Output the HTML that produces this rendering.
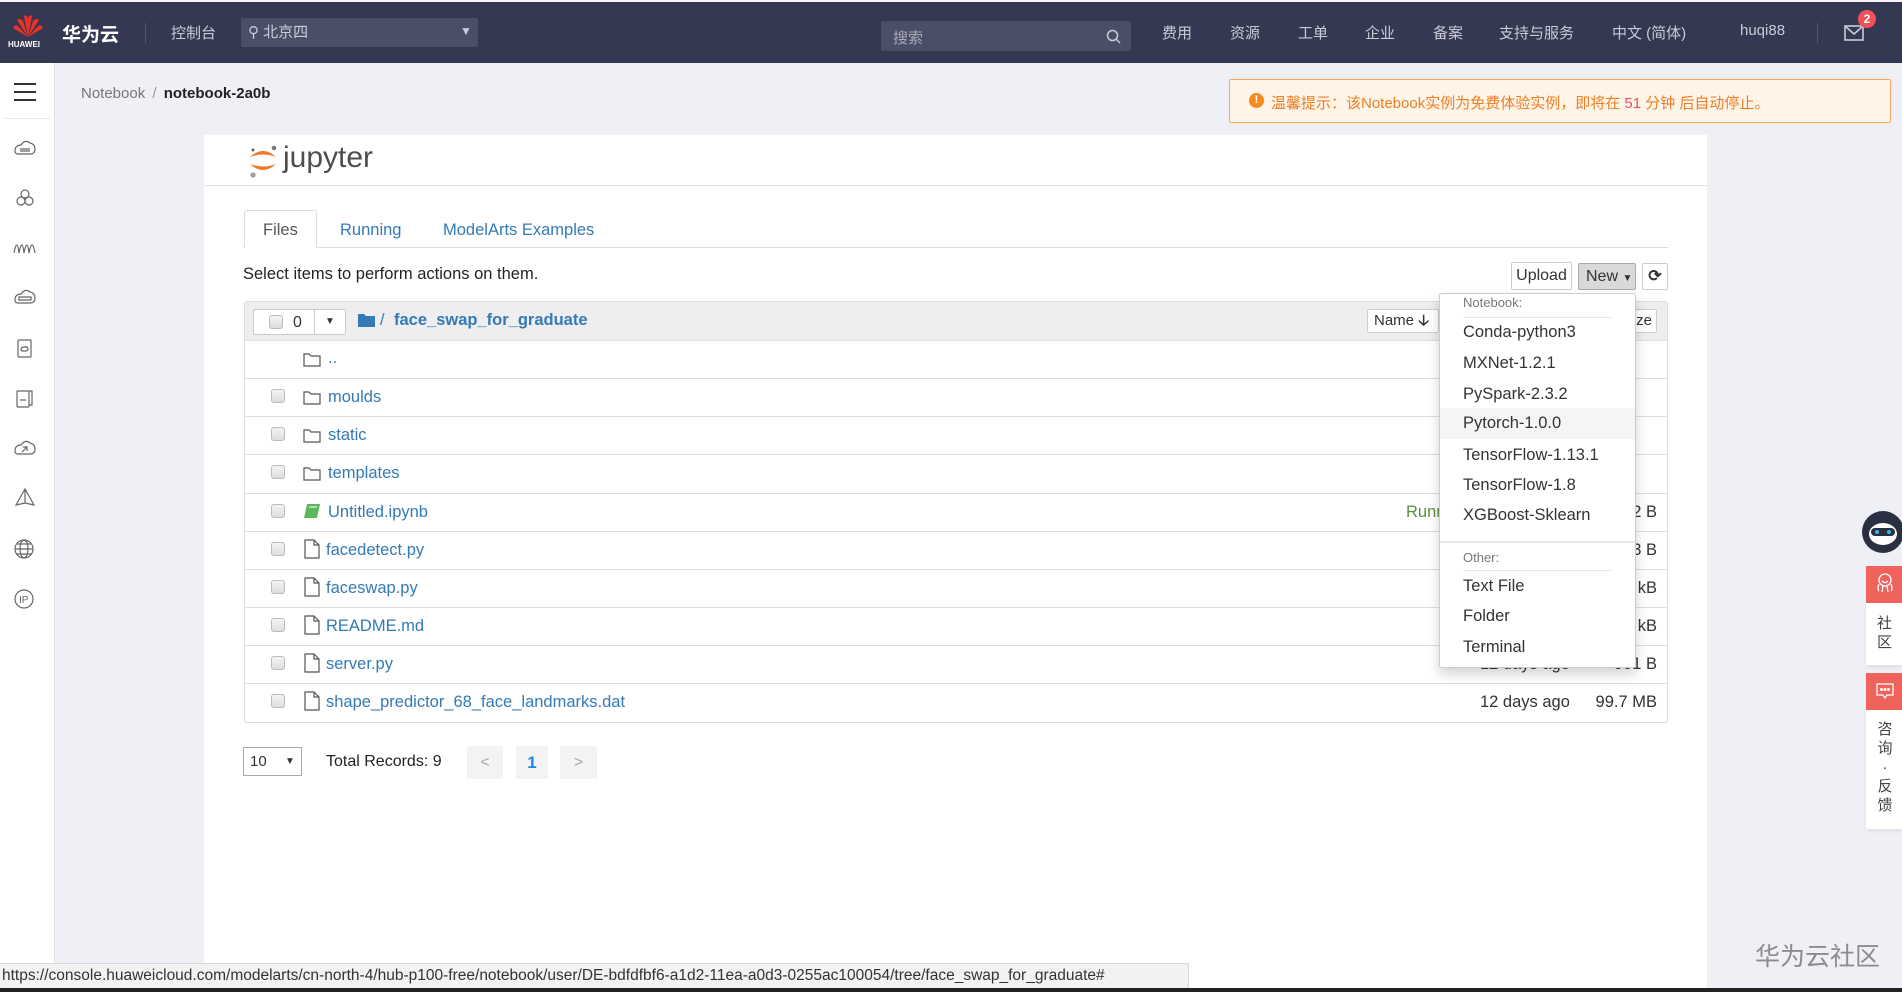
<!DOCTYPE html>
<html><head><meta charset="utf-8">
<style>
*{box-sizing:border-box;margin:0;padding:0}
body{width:1902px;height:992px;overflow:hidden;background:#eef0f5;font-family:"Liberation Sans","Noto Sans CJK SC",sans-serif;position:relative;color:#333}
.a{position:absolute;white-space:nowrap}
.top{position:absolute;left:0;top:0;width:1902px;height:63px;background:#353851;border-top:2px solid #f5f5f5}
.nav{position:absolute;top:20px;font-size:15px;color:#c9cbd8}
.side{position:absolute;left:0;top:63px;width:55px;height:929px;background:#fff;border-right:1px solid #e2e4ea}
.panel{position:absolute;left:204px;top:135px;width:1503px;height:857px;background:#fff}
.row{position:absolute;left:244px;width:1424px;height:38px;border-top:1px solid #ddd;font-size:16.5px}
.cb{position:absolute;left:271px;width:14px;height:14px;border:1px solid #bbb;border-radius:3px;background:linear-gradient(#f4f4f4,#ddd)}
.nm{position:absolute;left:327px;color:#337ab7;top:9px}
.sz{position:absolute;right:11px;top:9px;text-align:right}
.dd{font-size:16.5px;color:#333;position:absolute;left:1463px}
</style></head><body>
<div class="top">
 <svg class="a" style="left:11px;top:11px" width="34" height="26" viewBox="0 0 34 26"><g fill="#e8312a"><path d="M17 24 L13 3 Q16 1 17 6Z"/><path d="M17 24 L21 3 Q18 1 17 6Z"/><path d="M17 24 L6 7 Q9 4 12 8Z"/><path d="M17 24 L28 7 Q25 4 22 8Z"/><path d="M17 24 L2 15 Q3 11 7 13Z"/><path d="M17 24 L32 15 Q31 11 27 13Z"/></g></svg>
 <div class="a" style="left:8px;top:38px;font-size:8px;color:#fff;font-weight:bold">HUAWEI</div>
 <div class="a" style="left:62px;top:18px;font-size:19px;color:#fff;font-weight:bold">华为云</div>
 <div class="a" style="left:145px;top:21px;width:1px;height:20px;background:#555870"></div>
 <div class="nav" style="left:171px">控制台</div>
 <div class="a" style="left:241px;top:16px;width:237px;height:29px;background:#4b4e67;border-radius:2px"></div>
 <div class="a" style="left:248px;top:19px;font-size:15px;color:#c9cbd8">⚲ 北京四</div>
 <div class="a" style="left:460px;top:22px;font-size:12px;color:#c9cbd8">▼</div>
 <div class="a" style="left:881px;top:19px;width:250px;height:30px;background:#4b4e67;border-radius:2px"></div>
 <div class="a" style="left:893px;top:25px;font-size:15px;color:#a9abba">搜索</div>
 <svg class="a" style="left:1106px;top:27px" width="15" height="15"><circle cx="6.5" cy="6.5" r="5" fill="none" stroke="#c9cbd8" stroke-width="1.5"/><path d="M10 10 L14 14" stroke="#c9cbd8" stroke-width="1.5"/></svg>
 <div class="nav" style="left:1162px">费用</div><div class="nav" style="left:1230px">资源</div><div class="nav" style="left:1298px">工单</div><div class="nav" style="left:1365px">企业</div><div class="nav" style="left:1433px">备案</div><div class="nav" style="left:1499px">支持与服务</div><div class="nav" style="left:1612px">中文 (简体)</div><div class="nav" style="left:1740px">huqi88</div>
 <div class="a" style="left:1817px;top:21px;width:1px;height:20px;background:#555870"></div>
 <svg class="a" style="left:1844px;top:22px" width="20" height="18"><rect x="1" y="2" width="18" height="14" fill="none" stroke="#c9cbd8" stroke-width="1.6"/><path d="M1 2 L10 10 L19 2" fill="none" stroke="#c9cbd8" stroke-width="1.6"/></svg>
 <div class="a" style="left:1858px;top:8px;width:18px;height:18px;border-radius:9px;background:#f0505a;color:#fff;font-size:12px;text-align:center;line-height:18px;font-weight:bold">2</div>
</div>
<div class="side">
 <div class="a" style="left:14px;top:20px;width:22px;height:2px;background:#333;box-shadow:0 8px 0 #333,0 16px 0 #333"></div>
 <div class="a" style="left:4px;top:55px;width:46px;height:1px;background:#e6e6e6"></div>
 <svg class="a" style="left:12px;top:75px" width="26" height="480" fill="none" stroke="#666" stroke-width="1.2">
  <path d="M3 13 Q3 7 9 7 Q13 1 18 5 Q23 6 23 11 Q23 16 18 16 H6 Q3 16 3 13Z M8 11 H18 M8 13 H18"/>
  <g transform="translate(0,50)"><circle cx="13" cy="6" r="4"/><circle cx="9" cy="13" r="4"/><circle cx="17" cy="13" r="4"/></g>
  <path transform="translate(0,99)" d="M2 16 Q5 0 7 16 Q10 0 12 16 Q15 0 17 16 Q20 0 23 16"/>
  <path transform="translate(0,149)" d="M3 13 Q3 7 9 7 Q13 1 18 5 Q23 6 23 11 Q23 16 18 16 H6 Q3 16 3 13Z M7 10 H19 V13 H7Z"/>
  <g transform="translate(0,200)"><rect x="6" y="2" width="13" height="17" rx="1"/><path d="M9 12 Q9 9 12 9 Q15 8 16 11 Q16 13 14 13 H10Z"/></g>
  <g transform="translate(0,250)"><rect x="5" y="3" width="12" height="16" rx="1"/><path d="M17 3 H20 V17 H17 M8 12 H14"/></g>
  <path transform="translate(0,299)" d="M3 14 Q3 8 9 8 Q13 2 18 6 Q23 7 23 12 Q23 17 18 17 H6 Q3 17 3 14Z M10 15 L15 10 M11 10 H15 V14"/>
  <path transform="translate(0,349)" d="M13 2 V16 M13 2 L4 18 L13 16 L22 18 Z"/>
  <g transform="translate(0,400)"><circle cx="12" cy="11" r="9"/><ellipse cx="12" cy="11" rx="4" ry="9"/><path d="M3 11 H21 M5 6 H19 M5 16 H19"/></g>
  <g transform="translate(0,450)"><circle cx="12" cy="11" r="9"/><text x="7" y="15" font-size="10" fill="#666" stroke="none" font-family="Liberation Sans">IP</text></g>
 </svg>
</div>
<div class="a" style="left:81px;top:85px;font-size:15px;color:#777">Notebook <span style="color:#999;margin:0 3px">/</span> <b style="color:#222">notebook-2a0b</b></div>
<div class="a" style="left:1229px;top:79px;width:662px;height:44px;background:#fff4e8;border:1px solid #f8a85c;border-radius:2px"></div>
<div class="a" style="left:1249px;top:93px;width:15px;height:15px;border-radius:8px;background:#f58a1f;color:#fff;font-size:11px;text-align:center;line-height:15px;font-weight:bold">!</div>
<div class="a" style="left:1271px;top:92px;font-size:15px;color:#f07d22">温馨提示：该Notebook实例为免费体验实例，即将在 <span style="color:#e5505a">51</span> 分钟 后自动停止。</div>

<div class="panel"></div>
<svg class="a" style="left:246px;top:142px" width="34" height="38"><path d="M4 15 Q17 3 30 15 Q17 10 4 15Z" fill="#f37726"/><path d="M4 22 Q17 34 30 22 Q17 27 4 22Z" fill="#f37726"/><circle cx="28" cy="6" r="2.3" fill="#767677"/><circle cx="7" cy="33" r="2.6" fill="#9e9e9e"/><circle cx="7" cy="8" r="1.5" fill="#616262"/></svg>
<div class="a" style="left:283px;top:141px;font-size:30px;color:#4e4e4e">jupyter</div>
<div class="a" style="left:204px;top:185px;width:1503px;height:1px;background:#e3e3e3"></div>

<div class="a" style="left:243px;top:247px;width:1425px;height:1px;background:#ddd"></div>
<div class="a" style="left:244px;top:210px;width:73px;height:38px;background:#fff;border:1px solid #ddd;border-bottom:none;border-radius:3px 3px 0 0"></div>
<div class="a" style="left:263px;top:221px;font-size:16.5px;color:#555">Files</div>
<div class="a" style="left:340px;top:221px;font-size:16.5px;color:#337ab7">Running</div>
<div class="a" style="left:443px;top:221px;font-size:16.5px;color:#337ab7">ModelArts Examples</div>
<div class="a" style="left:243px;top:265px;font-size:16.5px;color:#222">Select items to perform actions on them.</div>

<div class="a" style="left:1511px;top:262px;width:61px;height:28px;border:1px solid #ccc;border-radius:2px;font-size:16px;text-align:center;line-height:26px">Upload</div>
<div class="a" style="left:1578px;top:263px;width:58px;height:27px;border:1px solid #aaa;background:#d9d9d9;border-radius:2px;font-size:16px;line-height:25px;padding-left:7px">New <span style="font-size:10px">▼</span></div>
<div class="a" style="left:1642px;top:263px;width:26px;height:27px;border:1px solid #ccc;border-radius:2px;font-size:16px;text-align:center;line-height:25px;font-weight:bold">⟳</div>

<div class="a" style="left:244px;top:301px;width:1424px;height:422px;border:1px solid #ddd;border-radius:3px"></div>
<div class="a" style="left:245px;top:302px;width:1422px;height:38px;background:#eee"></div>
<div class="a" style="left:253px;top:309px;width:93px;height:26px;background:#fff;border:1px solid #ccc;border-radius:2px"></div>
<div class="a" style="left:314px;top:309px;width:1px;height:26px;background:#ccc"></div>
<div class="cb" style="left:269px;top:315px"></div>
<div class="a" style="left:293px;top:314px;font-size:16px">0</div>
<div class="a" style="left:325px;top:316px;font-size:10px">▼</div>
<svg class="a" style="left:358px;top:313px" width="17" height="14"><path d="M0 1 H6 L8 3 H17 V14 H0Z" fill="#337ab7"/></svg>
<div class="a" style="left:380px;top:311px;font-size:16.5px;color:#337ab7">/</div>
<div class="a" style="left:394px;top:311px;font-size:16.5px;color:#337ab7;font-weight:bold">face_swap_for_graduate</div>
<div class="a" style="left:1367px;top:309px;width:72px;height:24px;background:#fff;border:1px solid #ccc;border-radius:2px;font-size:15px;line-height:22px;padding-left:6px">Name <b>🡣</b></div>
<div class="a" style="left:1590px;top:309px;width:67px;height:24px;background:#fff;border:1px solid #ccc;border-radius:2px;font-size:15px;line-height:22px;padding-left:6px">File size</div>

<div class="row" style="top:340px"><svg class="a" style="left:59px;top:11px" width="18" height="15" fill="none" stroke="#555" stroke-width="1.2"><path d="M1 2 H6 L8 4 H17 V14 H1Z"/></svg><span class="a" style="left:84px;top:8px;color:#337ab7">..</span></div>
<div class="row" style="top:378px"><svg class="a" style="left:59px;top:11px" width="18" height="15" fill="none" stroke="#555" stroke-width="1.2"><path d="M1 2 H6 L8 4 H17 V14 H1Z"/></svg><span class="nm" style="left:84px">moulds</span></div>
<div class="row" style="top:416px"><svg class="a" style="left:59px;top:11px" width="18" height="15" fill="none" stroke="#555" stroke-width="1.2"><path d="M1 2 H6 L8 4 H17 V14 H1Z"/></svg><span class="nm" style="left:84px">static</span></div>
<div class="row" style="top:454px"><svg class="a" style="left:59px;top:11px" width="18" height="15" fill="none" stroke="#555" stroke-width="1.2"><path d="M1 2 H6 L8 4 H17 V14 H1Z"/></svg><span class="nm" style="left:84px">templates</span></div>
<div class="row" style="top:493px"><svg class="a" style="left:59px;top:9px" width="18" height="16"><path d="M4 1 H17 L14 15 H1Z" fill="#5cb85c"/><path d="M6 4 H14" stroke="#fff"/></svg><span class="nm" style="left:84px">Untitled.ipynb</span><span class="a" style="left:1162px;top:9px;color:#5a8f3c">Running</span><span class="sz">742 B</span></div>
<div class="row" style="top:531px"><svg class="a" style="left:60px;top:7px" width="16" height="20" fill="none" stroke="#555" stroke-width="1.2"><path d="M1 1 H10 L15 6 V19 H1Z M10 1 V6 H15"/></svg><span class="nm" style="left:82px">facedetect.py</span><span class="sz">683 B</span></div>
<div class="row" style="top:569px"><svg class="a" style="left:60px;top:7px" width="16" height="20" fill="none" stroke="#555" stroke-width="1.2"><path d="M1 1 H10 L15 6 V19 H1Z M10 1 V6 H15"/></svg><span class="nm" style="left:82px">faceswap.py</span><span class="sz">8.3 kB</span></div>
<div class="row" style="top:607px"><svg class="a" style="left:60px;top:7px" width="16" height="20" fill="none" stroke="#555" stroke-width="1.2"><path d="M1 1 H10 L15 6 V19 H1Z M10 1 V6 H15"/></svg><span class="nm" style="left:82px">README.md</span><span class="sz">1.2 kB</span></div>
<div class="row" style="top:645px"><svg class="a" style="left:60px;top:7px" width="16" height="20" fill="none" stroke="#555" stroke-width="1.2"><path d="M1 1 H10 L15 6 V19 H1Z M10 1 V6 H15"/></svg><span class="nm" style="left:82px">server.py</span><span class="a" style="left:1236px;top:9px">12 days ago</span><span class="sz">901 B</span></div>
<div class="row" style="top:683px"><svg class="a" style="left:60px;top:7px" width="16" height="20" fill="none" stroke="#555" stroke-width="1.2"><path d="M1 1 H10 L15 6 V19 H1Z M10 1 V6 H15"/></svg><span class="nm" style="left:82px">shape_predictor_68_face_landmarks.dat</span><span class="a" style="left:1236px;top:9px">12 days ago</span><span class="sz">99.7 MB</span></div>
<div class="cb" style="top:389px"></div><div class="cb" style="top:427px"></div><div class="cb" style="top:465px"></div><div class="cb" style="top:504px"></div><div class="cb" style="top:542px"></div><div class="cb" style="top:580px"></div><div class="cb" style="top:618px"></div><div class="cb" style="top:656px"></div><div class="cb" style="top:694px"></div>

<div class="a" style="left:1439px;top:293px;width:197px;height:375px;background:#fff;border:1px solid #ccc;border-radius:3px;box-shadow:0 6px 12px rgba(0,0,0,.18)"></div>
<div class="a" style="left:1440px;top:408px;width:195px;height:31px;background:#f5f5f5"></div>
<div class="a" style="left:1463px;top:295px;font-size:13px;color:#777">Notebook:</div>
<div class="a" style="left:1463px;top:317px;width:148px;height:1px;background:#e5e5e5"></div>
<div class="dd" style="top:323px">Conda-python3</div>
<div class="dd" style="top:354px">MXNet-1.2.1</div>
<div class="dd" style="top:385px">PySpark-2.3.2</div>
<div class="dd" style="top:414px">Pytorch-1.0.0</div>
<div class="dd" style="top:446px">TensorFlow-1.13.1</div>
<div class="dd" style="top:476px">TensorFlow-1.8</div>
<div class="dd" style="top:506px">XGBoost-Sklearn</div>
<div class="a" style="left:1440px;top:541px;width:195px;height:2px;background:#e8e8e8"></div>
<div class="a" style="left:1463px;top:550px;font-size:13px;color:#777">Other:</div>
<div class="a" style="left:1463px;top:570px;width:148px;height:1px;background:#e5e5e5"></div>
<div class="dd" style="top:577px">Text File</div>
<div class="dd" style="top:607px">Folder</div>
<div class="dd" style="top:638px">Terminal</div>

<div class="a" style="left:243px;top:747px;width:59px;height:29px;border:1px solid #aaa;font-size:15px;line-height:27px;padding-left:6px">10 <span style="position:absolute;left:41px;font-size:10px">▼</span></div>
<div class="a" style="left:326px;top:753px;font-size:16px;color:#222">Total Records: 9</div>
<div class="a" style="left:467px;top:746px;width:36px;height:33px;background:#f3f3f3;color:#aaa;font-size:16px;text-align:center;line-height:33px">&lt;</div>
<div class="a" style="left:516px;top:746px;width:32px;height:33px;background:#f3f3f3;color:#1e88e5;font-size:17px;font-weight:bold;text-align:center;line-height:33px">1</div>
<div class="a" style="left:560px;top:746px;width:37px;height:33px;background:#f3f3f3;color:#aaa;font-size:16px;text-align:center;line-height:33px">&gt;</div>

<svg class="a" style="left:1860px;top:509px" width="44" height="46"><circle cx="23" cy="23" r="21" fill="#2b2f42"/><ellipse cx="23" cy="25" rx="14" ry="11" fill="#fff"/><rect x="11" y="19" width="24" height="8" rx="4" fill="#2b2f42"/><circle cx="17" cy="23" r="2" fill="#3bb7d6"/><circle cx="29" cy="23" r="2" fill="#3bb7d6"/></svg>
<div class="a" style="left:1866px;top:566px;width:36px;height:37px;background:#f0625c"></div>
<svg class="a" style="left:1874px;top:572px" width="22" height="22" fill="none" stroke="#fff" stroke-width="1.3"><circle cx="11" cy="8" r="6"/><path d="M8 9 Q11 12 14 9 M5 12 Q3 17 5 19 M9 14 L8 20 M13 14 L14 20 M17 12 Q19 17 17 19"/></svg>
<div class="a" style="left:1866px;top:603px;width:36px;height:62px;background:#fff;box-shadow:0 2px 4px rgba(0,0,0,.08)"></div>
<div class="a" style="left:1877px;top:614px;font-size:15px;line-height:19px;color:#444;white-space:normal;width:16px">社区</div>
<div class="a" style="left:1866px;top:673px;width:36px;height:37px;background:#f0625c"></div>
<svg class="a" style="left:1875px;top:681px" width="20" height="20" fill="none" stroke="#fff" stroke-width="1.3"><path d="M2 3 H18 V14 H12 L10 17 L8 14 H2Z"/><circle cx="6.5" cy="8.5" r=".8" fill="#fff"/><circle cx="10" cy="8.5" r=".8" fill="#fff"/><circle cx="13.5" cy="8.5" r=".8" fill="#fff"/></svg>
<div class="a" style="left:1866px;top:710px;width:36px;height:119px;background:#fff;box-shadow:0 2px 4px rgba(0,0,0,.08)"></div>
<div class="a" style="left:1877px;top:720px;font-size:15px;line-height:19px;color:#444;white-space:normal;width:16px;text-align:center">咨询·反馈</div>

<div class="a" style="left:1755px;top:937px;font-size:25px;color:#8c8c8c">华为云社区</div>
<div class="a" style="left:0;top:963px;width:1189px;height:26px;background:#f2f2f2;border:1px solid #d6d6d6;border-left:none;font-size:15.5px;color:#333;padding-left:2px;line-height:24px">https://console.huaweicloud.com/modelarts/cn-north-4/hub-p100-free/notebook/user/DE-bdfdfbf6-a1d2-11ea-a0d3-0255ac100054/tree/face_swap_for_graduate#</div>
<div class="a" style="left:0;top:988px;width:1902px;height:4px;background:#222"></div>
</body></html>
